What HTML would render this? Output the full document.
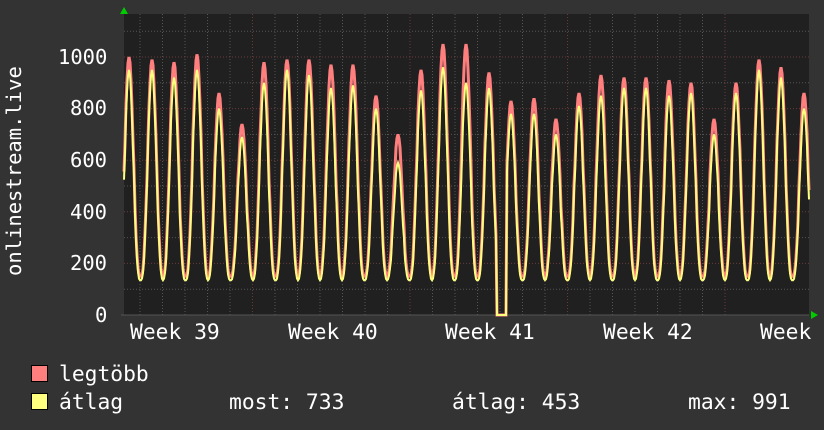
<!DOCTYPE html>
<html><head><meta charset="utf-8"><style>
html,body{margin:0;padding:0;background:#333;}
body{width:824px;height:430px;position:relative;overflow:hidden;font-family:"DejaVu Sans Mono","Liberation Mono",monospace;color:#fff;}
.t{position:absolute;font-size:20.5px;line-height:1;white-space:pre;}
.b{font-size:21.3px;}
.sq{position:absolute;width:15px;height:15px;border:1px solid #000;}
</style></head><body>
<svg id="g" width="824" height="430" style="position:absolute;left:0;top:0">
<rect x="124" y="14" width="685" height="301" fill="#202020"/>
<g id="grid"></g>
<g id="data"></g>
<polygon points="120,14 128,14 124,7" fill="#0c0"/>
<polygon points="811,311 811,319 818,315" fill="#0c0"/>
</svg>
<div class="t" style="left:58px;top:47px">1000</div>
<div class="t" style="left:70px;top:98px">800</div>
<div class="t" style="left:70px;top:150px">600</div>
<div class="t" style="left:70px;top:202px">400</div>
<div class="t" style="left:70px;top:253px">200</div>
<div class="t" style="left:95px;top:305px">0</div>
<div class="t" style="left:4px;top:276px;transform-origin:0 0;transform:rotate(-90deg)">onlinestream.live</div>
<div class="t b" style="left:130px;top:322px">Week 39</div>
<div class="t b" style="left:288px;top:322px">Week 40</div>
<div class="t b" style="left:445px;top:322px">Week 41</div>
<div class="t b" style="left:603px;top:322px">Week 42</div>
<div class="t b" style="left:760px;top:322px">Week</div>
<div class="sq" style="left:31px;top:365px;background:#ff7f7f"></div>
<div class="sq" style="left:31px;top:393px;background:#ffff7f"></div>
<div class="t b" style="left:59px;top:364px">legtöbb</div>
<div class="t b" style="left:59px;top:392px">átlag</div>
<div class="t b" style="left:229px;top:392px">most: 733</div>
<div class="t b" style="left:452px;top:392px">átlag: 453</div>
<div class="t b" style="left:688px;top:392px">max: 991</div>
<script>
function Y(v){return 315-v*0.258;}
var grid=document.getElementById('grid'),h='';
for(var v=100;v<=1100;v+=100){var y=Y(v);h+='<line x1="124" x2="809" y1="'+y+'" y2="'+y+'" stroke="'+(v%200==0?'#6a3a3a':'#555')+'" stroke-dasharray="1,2"/>';}
for(var x=725;x>124;x-=22.5){var wk=Math.abs((725-x)%157.5)<0.1;h+='<line y1="14" y2="315" x1="'+x+'" x2="'+x+'" stroke="'+(wk?'#6a3a3a':'#555')+'" stroke-dasharray="1,2"/>';}
h+='<line x1="121" x2="809" y1="315" y2="315" stroke="#555"/>';
grid.innerHTML=h;
var P=[[129,1000,950],[152,990,950],[174,980,920],[197,1010,950],[219,860,800],[242,740,690],[264,980,900],[287,990,950],[309,990,930],[331,970,880],[353,970,890],[376,850,800],[398,700,590],[421,950,870],[443,1050,960],[466,1050,900],[489,940,880],[511,830,780],[534,840,780],[556,760,700],[579,860,810],[601,930,850],[624,920,880],[646,920,880],[669,910,850],[691,900,860],[714,760,700],[736,900,860],[759,990,950],[781,960,920],[804,860,800]];
function series(idx,tr){var pts=[];for(var x=124;x<=809;x++){var k=0,d=1e9;for(var i=0;i<P.length;i++){var dd=Math.abs(x-P[i][0]);if(dd<d){d=dd;k=i;}}
var f=(1+Math.cos(2*Math.PI*(x-P[k][0])/22.5))/2;f=Math.pow(f,1.4);
var v=tr+(P[k][idx]-tr)*f+(Math.sin(x*1.7)*25+Math.sin(x*3.1)*15)*f*(1-f)*2;
if(x>=497&&x<=506)v=0;
pts.push(x+','+Y(v).toFixed(1));}return pts.join(' ');}
document.getElementById('data').innerHTML='<polyline points="'+series(1,150)+'" fill="none" stroke="#ff7f7f" stroke-width="3"/><polyline points="'+series(2,135)+'" fill="none" stroke="#ffff7f" stroke-width="2"/>';
</script>
</body></html>
